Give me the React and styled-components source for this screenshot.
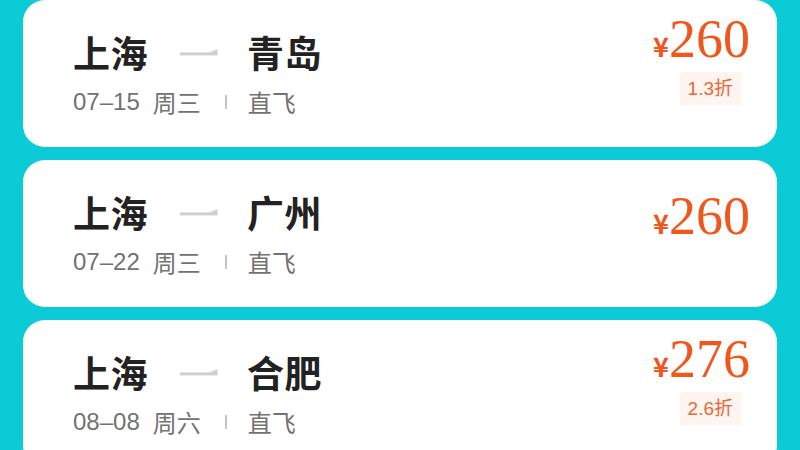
import React from 'react' ;
import styled, { createGlobalStyle } from 'styled-components' ;

const GlobalStyle = createGlobalStyle`
    html, body {
        margin : 0 ;
        padding : 0 ;
        background : #0ccad6 ;
    }
    body {
        font-family : "Noto Sans CJK SC", "Noto Sans", sans-serif ;
    }
`;

const flights = [
    { from : "上海", to : "青岛", date : "07–15", week : "周三", type : "直飞", price : "260", discount : "1.3折" },
    { from : "上海", to : "广州", date : "07–22", week : "周三", type : "直飞", price : "260" },
    { from : "上海", to : "合肥", date : "08–08", week : "周六", type : "直飞", price : "276", discount : "2.6折" },
] ;

const Page = styled.div`
    width : 800px ;
    height : 450px ;
    overflow : hidden ;
    background : #0ccad6 ;
    padding : 0 23px ;
    box-sizing : border-box ;
    display : flex ;
    flex-direction : column ;
    gap : 13px ;
`;

const Card = styled.div`
    flex : none ;
    height : 147px ;
    background : #ffffff ;
    border-radius : 22px ;
    padding : 0 27px 0 50px ;
    box-sizing : border-box ;
    display : flex ;
    justify-content : space-between ;
    align-items : flex-start ;
`;

const Info = styled.div`
    display : flex ;
    flex-direction : column ;
    padding-top : 27px ;
`;

const Route = styled.div`
    display : flex ;
    align-items : center ;
    height : 50px ;
    font-size : 37px ;
    font-weight : 700 ;
    color : #222222 ;
`;

const City = styled.span`
    letter-spacing : 0.5px ;
`;

const Arrow = styled.svg`
    width : 38px ;
    height : 8px ;
    margin : 0 29px 0 32px ;
`;

const Meta = styled.div`
    display : flex ;
    align-items : center ;
    margin-top : 9px ;
    font-family : "Liberation Sans", "Noto Sans CJK SC", sans-serif ;
    font-size : 24px ;
    color : #727272 ;
    line-height : 32px ;
`;

const Week = styled.span`
    margin-left : 13px ;
    font-family : "Noto Sans CJK SC", sans-serif ;
`;

const Divider = styled.span`
    width : 2px ;
    height : 14px ;
    background : #c4c4c4 ;
    margin : 0 21px 0 24px ;
`;

const Kind = styled.span`
    font-family : "Noto Sans CJK SC", sans-serif ;
`;

const Side = styled.div`
    display : flex ;
    flex-direction : column ;
    align-items : flex-end ;
    padding-top : ${props => props.$tagged ? "11px" : "28px"} ;
`;

const Price = styled.div`
    display : flex ;
    align-items : baseline ;
    height : 56px ;
    color : #ef571d ;
    line-height : 56px ;
`;

const Yen = styled.span`
    font-family : "Noto Sans CJK SC", "Noto Sans", sans-serif ;
    font-size : 27px ;
    font-weight : 700 ;
    line-height : 27px ;
    margin-right : 0 ;
`;

const Amount = styled.span`
    font-family : "Liberation Serif", "Times New Roman", serif ;
    font-size : 54px ;
`;

const Tag = styled.div`
    margin : 5px 9px 0 0 ;
    padding : 0 8px ;
    height : 33px ;
    line-height : 33px ;
    background : #fff5f0 ;
    color : #e8683a ;
    font-family : "Liberation Sans", "Noto Sans CJK SC", sans-serif ;
    font-size : 19px ;
    border-radius : 3px ;
`;

const FlightCard = ({ flight }) => (
    <Card>
        <Info>
            <Route>
                <City>{ flight.from }</City>
                <Arrow viewBox="0 0 38 8">
                    <path d="M28 5 L37.5 1.2 V6 Z" fill="#cfcfcf" />
                    <rect x="0" y="4.4" width="37.5" height="3" fill="#cfcfcf" />
                </Arrow>
                <City>{ flight.to }</City>
            </Route>
            <Meta>
                <span>{ flight.date }</span>
                <Week>{ flight.week }</Week>
                <Divider />
                <Kind>{ flight.type }</Kind>
            </Meta>
        </Info>
        <Side $tagged={ !!flight.discount }>
            <Price>
                <Yen>¥</Yen>
                <Amount>{ flight.price }</Amount>
            </Price>
            { flight.discount && <Tag>{ flight.discount }</Tag> }
        </Side>
    </Card>
) ;

const App = () => {
    return (
        <>
            <GlobalStyle />
            <Page>
                { flights.map((flight, index) => (
                    <FlightCard key={index} flight={flight} />
                )) }
            </Page>
        </>
    ) ;
} ;

export default App ;
